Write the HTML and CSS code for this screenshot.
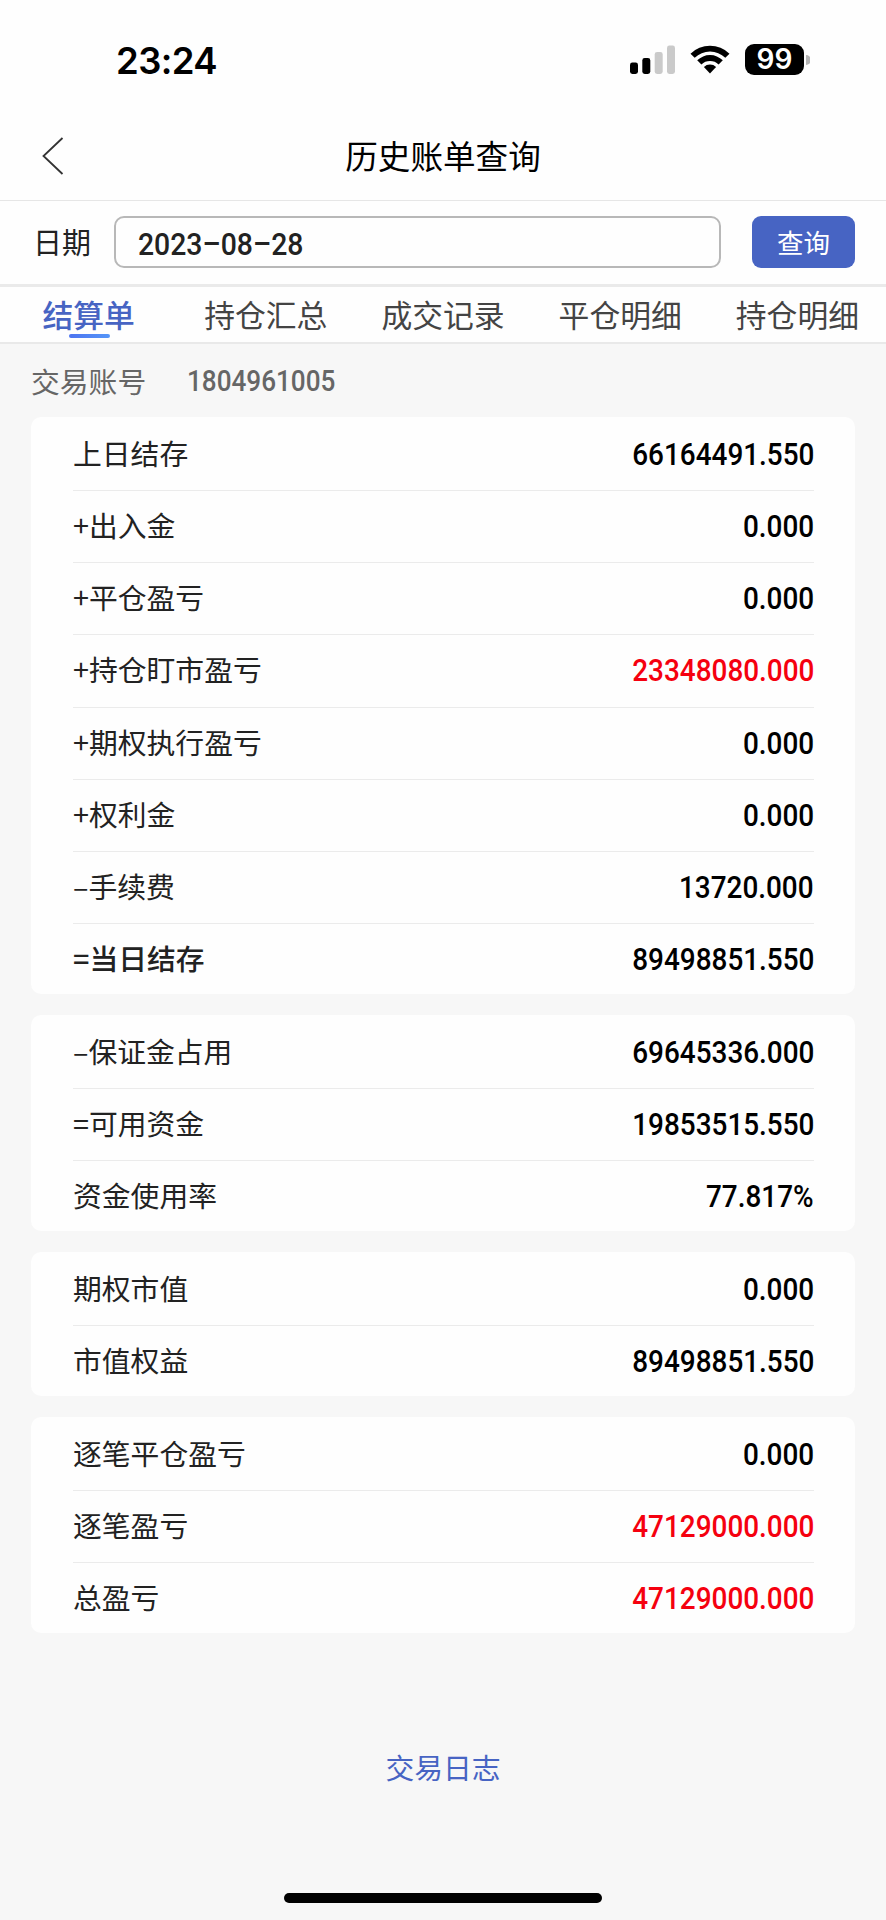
FILE: index.html
```html
<!DOCTYPE html>
<html lang="zh-CN">
<head>
  <meta charset="UTF-8"/>
  <meta name="viewport" content="width=device-width, initial-scale=1"/>
  <title>历史账单查询</title>
  <link rel="stylesheet" href="styles.css">
</head>
<body>
  <div class="status-bar">
    <div class="time">23:24</div>
    <div class="status-icons">
      <svg class="signal" width="46" height="30" viewBox="0 0 46 30">
        <rect x="0" y="17.5" width="8" height="11.5" rx="2.4"/>
        <rect x="12.3" y="13" width="8" height="16" rx="2.4"/>
        <rect x="24.7" y="7" width="8" height="22" rx="2.4" fill="#cacaca"/>
        <rect x="37" y="0.5" width="8" height="28.5" rx="2.4" fill="#cacaca"/>
      </svg>
      <svg class="wifi" width="40" height="30" viewBox="0 0 40 30">
        <path d="M0.5 8.7A28 28 0 0 1 39.5 8.7L35.3 12.8A22 22 0 0 0 4.7 12.8Z"/>
        <path d="M7.2 15.3A18.3 18.3 0 0 1 32.8 15.3L28.6 19.4A12.4 12.4 0 0 0 11.4 19.4Z"/>
        <path d="M13.9 22A8.8 8.8 0 0 1 26.1 22L20 28.5Z"/>
      </svg>
      <div class="battery">99</div>
      <svg width="4" height="10" viewBox="0 0 4 10"><path d="M0 0A5 5 0 0 1 0 10Z" fill="#b5b5b5"/></svg>
    </div>
  </div>

  <div class="header">
    <svg class="back" width="22" height="38" viewBox="0 0 22 38"><path d="M20.5 1L1.5 19L20.5 37"/></svg>
    <h1>历史账单查询</h1>
  </div>

  <div class="search">
    <label for="date">日期</label>
    <div class="date-box" id="date"><span class="num">2023–08–28</span></div>
    <button class="btn-query" type="button">查询</button>
  </div>

  <div class="tabs">
    <div class="tab active">结算单</div>
    <div class="tab">持仓汇总</div>
    <div class="tab">成交记录</div>
    <div class="tab">平仓明细</div>
    <div class="tab">持仓明细</div>
  </div>

  <div class="content">
    <div class="account"><span class="account-label">交易账号</span><span class="num">1804961005</span></div>

    <div class="card">
      <div class="row"><span>上日结存</span><span class="num">66164491.550</span></div>
      <div class="row"><span>+出入金</span><span class="num">0.000</span></div>
      <div class="row"><span>+平仓盈亏</span><span class="num">0.000</span></div>
      <div class="row"><span>+持仓盯市盈亏</span><span class="num red">23348080.000</span></div>
      <div class="row"><span>+期权执行盈亏</span><span class="num">0.000</span></div>
      <div class="row"><span>+权利金</span><span class="num">0.000</span></div>
      <div class="row"><span>–手续费</span><span class="num">13720.000</span></div>
      <div class="row total"><span>=当日结存</span><span class="num">89498851.550</span></div>
    </div>

    <div class="card">
      <div class="row"><span>–保证金占用</span><span class="num">69645336.000</span></div>
      <div class="row"><span>=可用资金</span><span class="num">19853515.550</span></div>
      <div class="row"><span>资金使用率</span><span class="num">77.817%</span></div>
    </div>

    <div class="card">
      <div class="row"><span>期权市值</span><span class="num">0.000</span></div>
      <div class="row"><span>市值权益</span><span class="num">89498851.550</span></div>
    </div>

    <div class="card">
      <div class="row"><span>逐笔平仓盈亏</span><span class="num">0.000</span></div>
      <div class="row"><span>逐笔盈亏</span><span class="num red">47129000.000</span></div>
      <div class="row"><span>总盈亏</span><span class="num red">47129000.000</span></div>
    </div>
  </div>

  <div class="log-link">交易日志</div>
  <div class="home-bar"></div>
</body>
</html>
```
FILE: styles.css
```css
* { box-sizing: border-box; }
body {
  margin: 0; height: 1920px; display: flex; flex-direction: column; overflow: hidden;
  background: #f7f7f7; color: #222; font-family: "Noto Sans CJK SC", sans-serif;
}

.status-bar { height: 120px; background: #fefefe; display: flex; justify-content: space-between; padding: 44px 78px 0 116px; }
.time { font: 600 36.5px/34px Inter, sans-serif; color: #000; letter-spacing: -0.6px; }
.status-icons { display: flex; align-items: center; height: 31px; }
.signal { margin-right: 14px; }
.wifi { margin-right: 15px; }
.battery {
  width: 59px; height: 31px; margin-right: 2px; border-radius: 9px; background: #000; color: #fff;
  font: 600 28px/31px Inter, sans-serif; text-align: center;
}
.status-icons { margin-right: -2px; }

.header { height: 81px; background: #fefefe; border-bottom: 1px solid #e6e6e6; display: grid; grid-template-columns: 100px 1fr 100px; align-items: center; }
.back { margin: -8px 0 0 42px; fill: none; stroke: #333; stroke-width: 1.8; }
h1 { margin: -10px 0 0; font-size: 32.6px; font-weight: 400; line-height: 48px; text-align: center; color: #000; }

.search { height: 83px; background: #fefefe; display: flex; align-items: center; padding: 0 31px 1px 33px; }
.search label { width: 81px; font-size: 29px; line-height: 50px; margin-top: -2px; }
.date-box { width: 607px; height: 52px; padding-left: 22px; border: 2px solid #b8b8b8; border-radius: 10px; line-height: 54px; }
.num { display: inline-block; font-family: Roboto, sans-serif; font-weight: 500; font-size: 31px; transform: scaleX(0.9); }
.date-box .num { color: #222; transform: scaleX(0.915); transform-origin: left; }
.btn-query {
  width: 103px; height: 52px; margin-left: auto; padding: 0; border: 0; border-radius: 9px;
  background: #4764c3; color: #fff; font: 26.5px/48px "Noto Sans CJK SC", sans-serif;
}

.tabs { height: 60px; background: #fefefe; border-top: 3px solid #eaeaea; border-bottom: 2px solid #e9e9e9; display: flex; }
.tab { flex: 1; text-align: center; font-size: 30.8px; line-height: 54px; color: #444; white-space: nowrap; }
.tab.active { position: relative; color: #4764c3; font-weight: 500; }
.tab.active::after {
  content: ""; position: absolute; left: 50%; bottom: 4px; width: 41px; height: 4px; margin-left: -20px;
  border-radius: 2px; background: linear-gradient(90deg, #4d74f0, #5596f8);
}

.content { padding: 0 31px; }
.account { height: 73px; display: flex; align-items: center; color: #666; font-size: 28.8px; }
.account-label { width: 156px; }
.account .num { font-size: 29px; transform: scaleX(0.9); transform-origin: left; }

.card { margin-bottom: 20.6px; padding: 1px 41px 0 42px; border-radius: 10px; background: #fefefe; }
.row { height: 72.15px; display: flex; justify-content: space-between; border-top: 1px solid #ebebeb; font-size: 28.8px; line-height: 68px; }
.row:first-child { border-top-color: transparent; }
.row:last-child { height: 71.15px; }
.row .num { color: #000; line-height: 71px; transform-origin: right; }
.row .num.red { color: #f5000f; }
.total { font-weight: 500; }

.log-link { margin-top: 91px; text-align: center; font-size: 28.8px; line-height: 44px; color: #4764c3; }
.home-bar { width: 318px; height: 10px; margin: auto auto 17px; border-radius: 5px; background: #000; }
```
